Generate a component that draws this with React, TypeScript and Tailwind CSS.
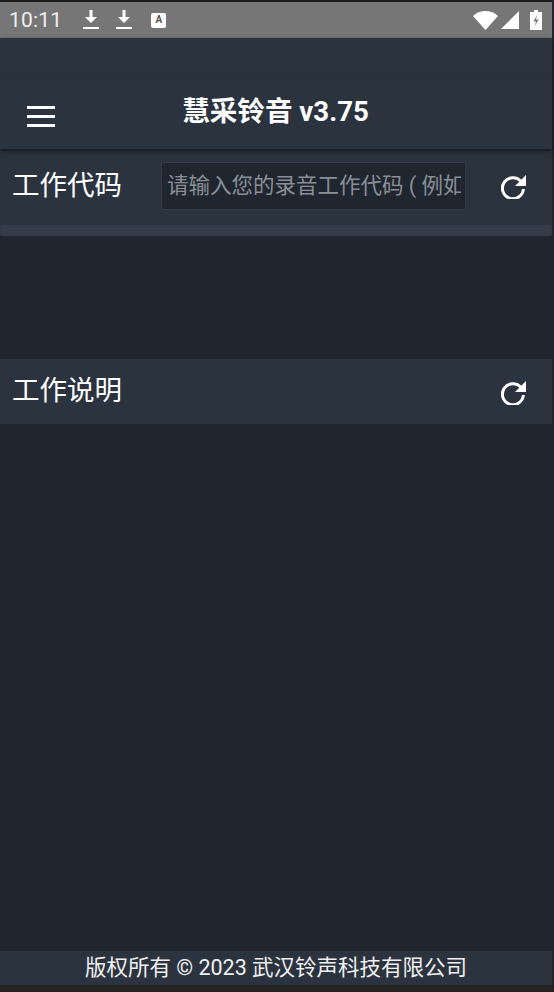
import React from 'react';

const DownloadIcon = () => (
  <svg width="16" height="20" viewBox="0 0 16 20" fill="white">
    <path d="M6.500 0h3v7H14l-6 6-6-6h4.500z" />
    <rect x="0" y="17" width="16" height="2" />
  </svg>
);

const RefreshIcon = () => (
  <svg width="25" height="24" viewBox="0 0 25 24" fill="none">
    <path d="M20 6.500A10.500 10.500 0 1 0 22.400 14" stroke="white" strokeWidth="3" />
    <path d="M25 0V11H14z" fill="white" />
  </svg>
);

const App = () => {
  return (
    <div className="h-[992px] w-[554px] flex flex-col overflow-hidden bg-[#1f2630] text-white font-['Roboto','Noto_Sans_CJK_SC',sans-serif]">
      <div className="h-[38px] shrink-0 mr-[2px] border-t-2 border-[#1c1c1c] bg-[#767676] flex items-center justify-between pl-[9px] pr-[10px]">
        <div className="flex items-center">
          <span className="text-[21px] leading-none text-[#eeeeee] tracking-[0.2px]">10:11</span>
          <span className="ml-[21px] flex"><DownloadIcon /></span>
          <span className="ml-[17px] flex"><DownloadIcon /></span>
          <span className="ml-[19px] w-[15px] h-[15px] bg-white rounded-[2px] flex items-center justify-center text-[10px] font-bold leading-none text-[#555555]">A</span>
        </div>
        <div className="flex items-center gap-[11px]">
          <div className="flex items-center gap-[3px]">
            <svg width="25" height="19" viewBox="0 0 25 19" fill="white"><path d="M0 5C3.500 1.800 8 0 12.500 0S21.500 1.800 25 5L12.500 19z" /></svg>
            <svg width="18" height="18" viewBox="0 0 18 18" fill="white"><path d="M18 0V18H0z" /></svg>
          </div>
          <svg width="12" height="20" viewBox="0 0 12 20" fill="white"><path d="M4 0h4v2h4v18H0V2h4z" /><path d="M7 5L3.500 11.500H6L5 16l3.500-6.500H6z" fill="#767676" /></svg>
        </div>
      </div>

      <header className="h-[111px] shrink-0 mr-[2px] bg-[#2b333f] shadow-[0_2px_5px_rgba(0,0,0,0.55)] relative z-10 flex flex-col">
        <div className="h-[37px] border-b border-[#29303b]" />
        <div className="relative flex-1 flex items-start justify-center pt-[19px]">
          <div className="absolute left-[27px] top-[31px] w-[28px] flex flex-col gap-[6px]">
            <div className="h-[3px] bg-white" />
            <div className="h-[3px] bg-white" />
            <div className="h-[3px] bg-white" />
          </div>
          <span className="text-[27.6px] leading-[36px] font-bold -ml-[1px]">慧采铃音 v3.75</span>
        </div>
      </header>

      <section className="h-[87px] shrink-0 mr-[2px] bg-[#2b333f] flex flex-col">
        <div className="flex-1 flex items-center pl-[12px] pr-[26px]">
          <span className="text-[27.5px] leading-none w-[149px] shrink-0 -mt-[2px]">工作代码</span>
          <div className="w-[305px] h-[48px] shrink-0 -mt-[3px] bg-[#1f2630] border border-[#333b48] rounded-[2px] pl-[5px] pr-[4px] flex items-center">
            <div className="w-full overflow-hidden">
              <span className="block text-[21.5px] leading-[28px] text-[#8a8f96] whitespace-nowrap">请输入您的录音工作代码 ( 例如</span>
            </div>
          </div>
          <div className="ml-auto flex"><RefreshIcon /></div>
        </div>
        <div className="h-[11px] bg-[#353c49] rounded-[3px]" />
      </section>

      <div className="h-[123px] shrink-0" />

      <section className="h-[65px] shrink-0 mr-[2px] bg-[#2b333f] flex items-center justify-between pl-[12px] pr-[26px]">
        <span className="text-[27.5px] leading-none -mt-[2px]">工作说明</span>
        <div className="flex mt-[3px]"><RefreshIcon /></div>
      </section>

      <div className="flex-1" />

      <footer className="h-[34px] shrink-0 mr-[2px] bg-[#2b333f] flex items-center justify-center">
        <span className="text-[21.5px] leading-none text-[#f0f0f0]">版权所有 © 2023 武汉铃声科技有限公司</span>
      </footer>
      <div className="h-[7px] shrink-0 bg-[#222222]" />
    </div>
  );
};

export default App;
